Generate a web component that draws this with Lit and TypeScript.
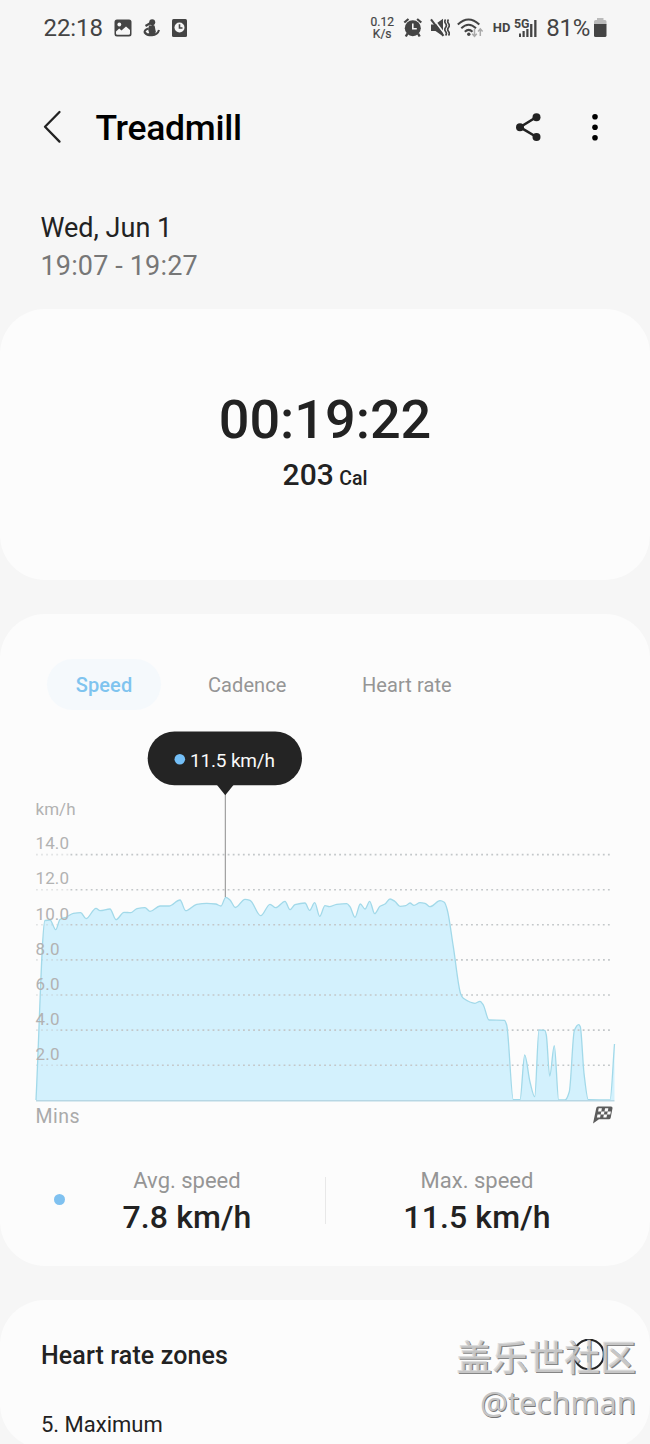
import { LitElement, html, svg, css } from "lit";
import { customElement } from "lit/decorators.js";

type Point = [number, number];

// Speed curve in chart coordinates.
const SPEED: Point[] = [
  [36, 1100], [45, 920.5], [50, 920], [55.7, 929.7], [60, 919.5], [66.7, 917], [73.3, 913.3], [80.7, 912.7],
  [86, 918.7], [96, 908.3], [100, 910.7], [110, 909], [116, 919.7], [124, 912.3], [130.7, 912.7], [137, 908.6],
  [145, 907.7], [150, 911.3], [160, 906], [169, 906], [180, 900], [185.7, 910.7], [196.7, 904.3], [206.7, 903.3],
  [215.7, 904], [221, 906], [225.7, 897.3], [230, 900], [235.3, 907.5], [245, 899.3], [250, 900.3], [260.7, 915.7],
  [270, 904.3], [275.7, 907.7], [285, 901.3], [290, 909.7], [295, 904.7], [305, 903], [309.7, 910.3], [314.7, 902.7],
  [319.7, 916.3], [325, 905.7], [329.3, 906.7], [336.7, 904.3], [346.7, 903.7], [350, 906.7], [355, 917.3],
  [360.3, 904], [365, 909], [369.7, 901.3], [374.7, 913.7], [380, 906.3], [385, 904], [390, 899], [395, 901.5],
  [400, 906.3], [405.7, 905.7], [410, 903], [414, 905.3], [420, 902.7], [425, 903.3], [430, 906.7], [440, 900.7],
  [444.3, 902.3], [447.3, 910], [453.3, 946.7], [460.7, 994], [463.3, 998.3], [475, 1003.3], [480, 1001.3],
  [483.3, 1005], [489, 1020], [504.3, 1020.3], [506.7, 1025], [513.3, 1099.7], [520, 1099.7], [524.7, 1055],
  [530, 1082], [534.7, 1096.7], [539, 1030], [544.7, 1030.3], [546.3, 1035], [549.7, 1076], [554.3, 1045.7],
  [558.7, 1100], [565, 1100], [569.3, 1091.7], [574.3, 1030.7], [578.7, 1024.7], [580.3, 1026.7], [584, 1073.3],
  [588.3, 1099.7], [610, 1100], [614.5, 1044],
];

// Monotone cubic interpolation, so peaks never overshoot their samples.
function curve(p: Point[]): string {
  const n = p.length;
  const s: number[] = [];
  for (let i = 0; i < n - 1; i++) s.push((p[i + 1][1] - p[i][1]) / (p[i + 1][0] - p[i][0]));
  const m = p.map((_, i) => {
    if (i === 0) return s[0];
    if (i === n - 1) return s[n - 2];
    return s[i - 1] * s[i] <= 0 ? 0 : (2 * s[i - 1] * s[i]) / (s[i - 1] + s[i]);
  });
  let d = `M${p[0][0]} ${p[0][1]}`;
  for (let i = 0; i < n - 1; i++) {
    const h = (p[i + 1][0] - p[i][0]) / 3;
    d += `C${p[i][0] + h} ${p[i][1] + m[i] * h} ${p[i + 1][0] - h} ${p[i + 1][1] - m[i + 1] * h} ${p[i + 1][0]} ${p[i + 1][1]}`;
  }
  return d;
}

@customElement("status-bar")
class StatusBar extends LitElement {
  static styles = css`
    :host { display: flex; align-items: center; height: 56px; padding: 0 42px 0 43.5px; color: #444; font-family: Roboto, "Noto Sans", sans-serif; }
    svg { display: block; flex: none; }
    .time { font-size: 24px; width: 69px; letter-spacing: -0.1px; }
    .notes { display: flex; align-items: center; gap: 9px; }
    .right { display: flex; align-items: center; margin-left: auto; }
    .rate { font-size: 12px; line-height: 11.5px; text-align: center; width: 26px; margin-right: 8px; padding-top: 1px; -webkit-text-stroke: 0.2px #444; }
    .mute, .wifi { margin-left: 7px; }
    .hd { font-size: 13px; font-weight: 700; margin: 0 4px 0 8.5px; line-height: 20px; }
    .pct { font-size: 24px; margin-left: 8px; letter-spacing: -0.3px; margin-right: 3px; }
  `;
  render() {
    return html`
      <span class="time">22:18</span>
      <div class="notes">
        <svg width="20" height="20" viewBox="0 0 20 20"><rect x="1.500" y="1.500" width="17" height="17" rx="2.500" fill="#444"/><circle cx="6.300" cy="6.500" r="1.900" fill="#f6f6f6"/><path d="M3 13.500 6.200 10.600 8.500 12.600 13 8.400 17 11.900V15.400q0 1.400-1.400 1.400H4.400Q3 16.800 3 15.400Z" fill="#f6f6f6"/></svg>
        <svg width="20" height="20" viewBox="0 0 20 20"><circle cx="10.200" cy="4.300" r="3" fill="#444"/><path d="M3.500 8 9 4.800M10.200 7Q12.500 10 12 14M8.500 8Q6.500 10.500 8 14" stroke="#444" stroke-width="2.200" fill="none"/><path d="M7.500 7.500h5l1.500 7-7 1z" fill="#444"/><path d="M6.500 10.500Q2 12 2.700 14.500 5 17.500 10 17.300 15.500 17 17 12" fill="none" stroke="#444" stroke-width="2.100"/><path d="M6 15.500 12.500 13.500 14 16.800 8 18z" fill="#444"/></svg>
        <svg width="18" height="20" viewBox="0 0 18 20"><rect x="1" y="1" width="15" height="18" rx="1.500" fill="#444"/><circle cx="8.500" cy="9.500" r="5" fill="#f6f6f6"/><path d="M8.500 6.300V10h3" fill="none" stroke="#444" stroke-width="1.600"/></svg>
      </div>
      <div class="right">
        <div class="rate">0.12<br/>K/s</div>
        <svg width="20" height="22" viewBox="0 0 20 22"><path d="M1.300 5.500 5.500 2M18.300 5.500 14.100 2" stroke="#444" stroke-width="2.200"/><circle cx="9.800" cy="11.200" r="8" fill="#444"/><path d="M4.500 16.500 2.800 19.500M15 16.500l1.700 3" stroke="#444" stroke-width="2.400"/><path d="M9.800 6.500v5.300h4" stroke="#f6f6f6" stroke-width="1.600" fill="none"/></svg>
        <svg class="mute" width="20" height="22" viewBox="0 0 20 22"><path d="M1 7.500h4L13 1.800v17.400L5.500 14H1z" fill="#444"/><path d="M2.800 1.200 15 17.500" stroke="#f6f6f6" stroke-width="1.700"/><path d="M1 2.300 13.500 18.900" stroke="#444" stroke-width="2"/><path d="M15.600 2.500q-1.600 2 0 4t0 4 0 4 0 4M18.500 2.500q-1.600 2 0 4t0 4 0 4 0 4" stroke="#444" stroke-width="1.700" fill="none"/></svg>
        <svg class="wifi" width="27" height="22" viewBox="0 0 27 22"><path d="M0.800 7.500Q11.500-2.500 22.300 7.500M4.300 11.300Q11.600 4.300 19 11.300M7.800 14.800Q11.700 11 15.500 14.800" fill="none" stroke="#444" stroke-width="2"/><circle cx="11.800" cy="17.300" r="1.700" fill="#444"/><path d="M17.500 12v7M15.200 16.700l2.300 2.600 2.300-2.600M23.300 19v-7M21 14.400l2.300-2.600 2.300 2.600" fill="none" stroke="#aaa" stroke-width="1.500"/></svg>
        <span class="hd">HD</span>
        <svg width="24" height="22" viewBox="0 0 24 22"><g fill="#444"><rect x="5" y="16.500" width="2" height="3.500"/><rect x="8.500" y="14" width="2.200" height="6"/><rect x="12.300" y="12" width="2.200" height="8"/><rect x="16.100" y="7" width="2.300" height="13"/><rect x="20.200" y="3" width="2.300" height="17"/></g><text x="0" y="11" font-size="12.500" font-weight="700" fill="#444" stroke="#f6f6f6" stroke-width="1.200" paint-order="stroke" textLength="15.500" lengthAdjust="spacingAndGlyphs">5G</text></svg>
        <span class="pct">81%</span>
        <svg width="15" height="22" viewBox="0 0 15 22"><path d="M4 1h6.500V3H12q1.500 0 1.500 1.500v3H1V4.500Q1 3 2.500 3H4z" fill="#bbb"/><path d="M1 7h12.500v11.400q0 1.600-1.600 1.600H2.600Q1 20 1 18.400z" fill="#444"/></svg>
      </div>
    `;
  }
}

@customElement("speed-chart")
class SpeedChart extends LitElement {
  static styles = css`
    :host { display: block; font-family: Roboto, "Noto Sans", sans-serif; }
    svg { display: block; }
    .axis { font-size: 17px; fill: #b2b2b2; }
    .mins { font-size: 19.5px; fill: #aaa; }
    .grid { stroke: #c3c7c9; stroke-width: 1.6; stroke-dasharray: 1.8 3.27; }
    .faint { opacity: 0.45; }
    .area { fill: #d3f1fd; }
    .line { fill: none; stroke: #a2d9e9; stroke-width: 1.3; stroke-linejoin: round; }
    .base { stroke: #b7d7e4; stroke-width: 1.4; }
    .tip { font-size: 19px; fill: #fafafa; }
  `;
  render() {
    const d = curve(SPEED);
    const rows = [14, 12, 10, 8, 6, 4, 2].map((v, i) => ({ v: v.toFixed(1), y: 854.6 + i * 35.1, wide: v >= 10 }));
    const checks: Point[] = [[0, 0], [2, 0], [1, 1], [3, 1], [0, 2], [2, 2]];
    return html`<svg width="650" height="410" viewBox="0 725 650 410">
      <path class="area" d="${d}V1100H36Z" />
      ${rows.map((r) => svg`
        <line class="grid faint" x1="36" x2=${r.wide ? 69 : 60} y1=${r.y} y2=${r.y} />
        <line class="grid" x1=${r.wide ? 70.5 : 60.5} x2="611" y1=${r.y} y2=${r.y} />
      `)}
      <path class="line" d=${d} />
      <line class="base" x1="36" x2="614.500" y1="1100.700" y2="1100.700" />
      <text class="axis" x="35.500" y="815.300" textLength="40">km/h</text>
      ${rows.map((r) => svg`<text class="axis" x="35.500" y=${r.y - 5.3} textLength=${r.wide ? 33.5 : 24}>${r.v}</text>`)}
      <text class="mins" x="35.500" y="1123.300" textLength="44">Mins</text>
      <line x1="225.300" x2="225.300" y1="790" y2="897" stroke="#8c8c8c" stroke-width="1" />
      <rect x="147.700" y="731.500" width="154.300" height="53.700" rx="26.850" fill="#242424" />
      <path d="M217 785h16.500l-8.250 10.300z" fill="#242424" />
      <circle cx="179.800" cy="759.300" r="5.300" fill="#74bff7" />
      <text class="tip" x="190" y="766.700" textLength="85">11.5 km/h</text>
      <g transform="translate(595.500 1106.500)">
        <path d="M2.500 0H15.500Q17.300 0 17 1.800L15.200 11.200Q14.900 12.700 13.300 12.700H3.500L-2.500 17 0.800 1.500Q1.100 0 2.500 0z" fill="#5c5c5c" />
        <g transform="translate(3.200 1.800) skewX(-11)" fill="#fcfcfc">
          ${checks.map(([x, y]) => svg`<rect x=${x * 3.2} y=${y * 3.1} width="3.200" height="3.100" />`)}
        </g>
      </g>
    </svg>`;
  }
}

@customElement("app-root")
class AppRoot extends LitElement {
  static styles = css`
    :host { display: block; position: relative; width: 650px; height: 1444px; overflow: hidden; background: #f6f6f6; color: #222; font-family: Roboto, "Noto Sans", sans-serif; }
    svg { display: block; }
    .header { display: flex; align-items: center; box-sizing: border-box; height: 142px; padding: 0 47px 1px 43px; }
    .back { width: 52.5px; }
    .title { margin: 2px 0 0; font-size: 35.5px; font-weight: 500; line-height: 42px; letter-spacing: -0.3px; color: #000; flex: 1; }
    .actions { display: flex; gap: 45px; }
    .when { box-sizing: border-box; height: 111px; padding: 10.5px 0 0 40.5px; font-size: 27px; line-height: 38.4px; }
    .range { color: #777; letter-spacing: 0.15px; }
    .card { background: #fcfcfc; border-radius: 45px; }
    .summary { height: 271px; display: flex; flex-direction: column; align-items: center; margin-bottom: 34px; }
    .timer { margin-top: 80px; font-size: 54px; font-weight: 500; line-height: 62px; }
    .burn { font-size: 30px; font-weight: 500; line-height: 36px; margin-top: 6px; word-spacing: -2px; }
    .unit { font-size: 19.5px; }
    .metrics { height: 652px; margin-bottom: 34px; }
    .tabs { display: flex; align-items: center; height: 51px; padding: 45px 0 0 47px; font-size: 20px; line-height: 53px; color: #959595; }
    .tab { margin-right: 75.5px; padding-top: 1px; letter-spacing: 0.08px; }
    .active { width: 114px; height: 51px; margin-right: 47px; text-align: center; border-radius: 26px; background: #f5f9fc; color: #7fc4ef; font-weight: 500; letter-spacing: 0.1px; }
    .chart { margin-top: 15px; }
    .stats { display: flex; align-items: center; padding: 33px 0 0 54px; }
    .dot { width: 11px; height: 11px; margin-bottom: 5px; border-radius: 50%; background: #7fc1f0; }
    .stat { text-align: center; width: 244px; margin-right: 16px; }
    .stat.second { width: 302px; margin-right: 0; }
    .label { font-size: 22px; line-height: 26px; color: #959595; }
    .value { font-size: 32px; line-height: 38px; font-weight: 500; margin-top: 4px; letter-spacing: 0.12px; }
    .rule { width: 1px; height: 47px; margin-bottom: 4px; background: #e8e8e8; }
    .zones { height: 149px; padding: 0 45px 0 41px; }
    .zone-head { display: flex; align-items: center; justify-content: space-between; padding-top: 37px; height: 36px; font-size: 25px; font-weight: 500; letter-spacing: 0.12px; }
    .zone-name { padding-top: 1px; }
    .zone { margin-top: 38px; font-size: 22px; line-height: 28px; }
    .mark { position: absolute; right: 14px; top: 1332px; text-align: right; }
    .community { font: 500 36px/46px "Noto Sans CJK SC", sans-serif; color: rgba(214, 214, 214, 0.82); text-shadow: 1.3px 1.3px 0 rgba(112, 112, 112, 0.85); }
    .author { font: 31px/49px "Noto Sans", sans-serif; color: #c4c4c4; text-shadow: 0.9px 0.9px 0 #777; }
  `;
  render() {
    return html`
      <status-bar></status-bar>
      <header class="header">
        <div class="back"><svg width="20" height="34" viewBox="0 0 20 34"><path d="M16.500 2 2 16.800 16.500 31.600" fill="none" stroke="#222" stroke-width="2.300" stroke-linecap="round" stroke-linejoin="round"/></svg></div>
        <h1 class="title">Treadmill</h1>
        <div class="actions">
          <svg width="28" height="30" viewBox="0 0 28 30"><path d="M22.500 5 6 15.200 22.500 25" fill="none" stroke="#222" stroke-width="2.600"/><g fill="#222"><circle cx="22.500" cy="5.200" r="4"/><circle cx="6" cy="15.200" r="4"/><circle cx="22.500" cy="25" r="4"/></g></svg>
          <svg width="16" height="30" viewBox="0 0 16 30"><circle cx="8" cy="4.700" r="2.800"/><circle cx="8" cy="15.200" r="2.800"/><circle cx="8" cy="25.700" r="2.800"/></svg>
        </div>
      </header>
      <section class="when"><div>Wed, Jun 1</div><div class="range">19:07 - 19:27</div></section>
      <section class="card summary">
        <div class="timer">00:19:22</div>
        <div class="burn">203 <span class="unit">Cal</span></div>
      </section>
      <section class="card metrics">
        <nav class="tabs"><span class="active">Speed</span><span class="tab">Cadence</span><span class="tab">Heart rate</span></nav>
        <speed-chart class="chart"></speed-chart>
        <div class="stats">
          <i class="dot"></i>
          <div class="stat"><div class="label">Avg. speed</div><div class="value">7.8 km/h</div></div>
          <i class="rule"></i>
          <div class="stat second"><div class="label">Max. speed</div><div class="value">11.5 km/h</div></div>
        </div>
      </section>
      <section class="card zones">
        <div class="zone-head"><span class="zone-name">Heart rate zones</span>
          <svg width="32" height="32" viewBox="0 0 32 32"><circle cx="16" cy="15.500" r="14.800" fill="none" stroke="#222" stroke-width="2.100"/><path d="M16 13V23.500" stroke="#222" stroke-width="3"/><circle cx="16" cy="8.500" r="1.900" fill="#222"/></svg>
        </div>
        <div class="zone">5. Maximum</div>
      </section>
      <div class="mark"><div class="community">盖乐世社区</div><div class="author">@techman</div></div>
    `;
  }
}
